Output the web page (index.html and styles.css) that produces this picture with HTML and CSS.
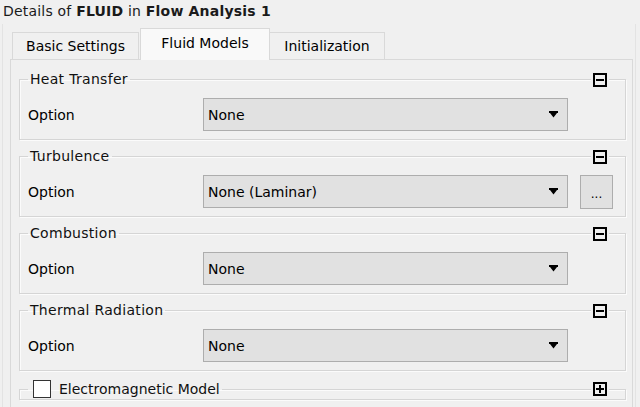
FILE: index.html
```html
<!DOCTYPE html>
<html>
<head>
<meta charset="utf-8">
<link rel="stylesheet" href="styles.css">
</head>
<body>
<div class="title">Details of <b>FLUID</b> in <b>Flow Analysis 1</b></div>
<div class="frame">
  <div class="tabs">
    <div class="tab">Basic Settings</div>
    <div class="tab active">Fluid Models</div>
    <div class="tab">Initialization</div>
  </div>
  <div class="panel">
    <fieldset class="group">
      <legend>Heat Transfer</legend>
      <span class="toggle minus"></span>
      <div class="row">
        <span class="label">Option</span>
        <div class="combo"><span>None</span><svg class="arrow" width="9" height="7" viewBox="0 0 9 7"><path d="M0 0H9V2H8L4.5 6.5L1 2H0Z" fill="#000"/></svg></div>
      </div>
    </fieldset>
    <fieldset class="group">
      <legend>Turbulence</legend>
      <span class="toggle minus"></span>
      <div class="row">
        <span class="label">Option</span>
        <div class="combo"><span>None (Laminar)</span><svg class="arrow" width="9" height="7" viewBox="0 0 9 7"><path d="M0 0H9V2H8L4.5 6.5L1 2H0Z" fill="#000"/></svg></div>
        <div class="more">...</div>
      </div>
    </fieldset>
    <fieldset class="group">
      <legend>Combustion</legend>
      <span class="toggle minus"></span>
      <div class="row">
        <span class="label">Option</span>
        <div class="combo"><span>None</span><svg class="arrow" width="9" height="7" viewBox="0 0 9 7"><path d="M0 0H9V2H8L4.5 6.5L1 2H0Z" fill="#000"/></svg></div>
      </div>
    </fieldset>
    <fieldset class="group">
      <legend>Thermal Radiation</legend>
      <span class="toggle minus"></span>
      <div class="row">
        <span class="label">Option</span>
        <div class="combo"><span>None</span><svg class="arrow" width="9" height="7" viewBox="0 0 9 7"><path d="M0 0H9V2H8L4.5 6.5L1 2H0Z" fill="#000"/></svg></div>
      </div>
    </fieldset>
    <fieldset class="group collapsed">
      <legend><span class="check"></span>Electromagnetic Model</legend>
      <span class="toggle plus"></span>
    </fieldset>
  </div>
</div>
</body>
</html>
```
FILE: styles.css
```css
html, body {
  margin: 0;
  padding: 0;
  background: #f0f0f0;
  height: 100%;
  overflow: hidden;
}
body {
  font-family: "DejaVu Sans", sans-serif;
  font-size: 14px;
  color: #000;
}
.title {
  height: 24px;
  line-height: 22px;
  padding-left: 3px;
  color: #1a1a1a;
  letter-spacing: 0.2px;
}
.title b {
  font-weight: bold;
}
.frame {
  margin-left: 2px;
  width: 634px;
  border-left: 1px solid #e3e3e3;
  border-right: 1px solid #e3e3e3;
  height: 400px;
  box-sizing: border-box;
  padding-top: 4px;
}
.tabs {
  display: flex;
  align-items: flex-end;
  height: 31px;
  margin-left: 9px;
  position: relative;
  z-index: 1;
}
.tab {
  height: 27px;
  box-sizing: border-box;
  border: 1px solid #d9d9d9;
  border-bottom: none;
  background: #f0f0f0;
  padding: 0 12px;
  display: flex;
  align-items: center;
  justify-content: center;
}
.tab:first-child { width: 127px; }
.tab:nth-child(3) { width: 116px; margin-left: -1px; }
.tab.active {
  width: 130px;
  height: 32px;
  margin-bottom: -1px;
  margin-left: 1px;
  background: #f9f9f9;
  padding-bottom: 4px;
}
.panel {
  margin-left: 7px;
  width: 623px;
  border: 1px solid #d9d9d9;
  border-bottom: none;
  box-sizing: border-box;
  height: 360px;
  padding: 11px 6px 0 8px;
  display: flex;
  flex-direction: column;
  gap: 8px;
}
.group {
  position: relative;
  margin: 0;
  padding: 11px 8px 8px 8px;
  border: 1px solid #d5d5d5;
  box-shadow: inset 1px 1px 0 #fbfbfb, 1px 1px 0 #fbfbfb;
  min-width: 0;
}
.group legend {
  padding: 0 2px;
  line-height: 16px;
  color: #111;
  display: flex;
  align-items: center;
  letter-spacing: 0.3px;
}
.group.collapsed {
  padding: 0 8px;
}
.group.collapsed legend {
  line-height: 20px;
  padding-left: 5px;
  letter-spacing: 0;
}
.check {
  width: 18px;
  height: 18px;
  box-sizing: border-box;
  border: 1px solid #333;
  background: #fff;
  margin-right: 8px;
}
.toggle {
  position: absolute;
  right: 18px;
  top: -14px;
  width: 14px;
  height: 14px;
  box-sizing: border-box;
  border: 2px solid #000;
  background: #f0f0f0;
  outline: 2px solid #f0f0f0;
}
.toggle::before {
  content: "";
  position: absolute;
  left: 1px;
  right: 1px;
  top: 4px;
  height: 2px;
  background: #000;
}
.toggle.plus::after {
  content: "";
  position: absolute;
  top: 1px;
  bottom: 1px;
  left: 4px;
  width: 2px;
  background: #000;
}
.group.collapsed .toggle {
  top: -17px;
}
.row {
  display: flex;
  align-items: center;
  height: 33px;
}
.label {
  width: 175px;
  flex: none;
}
.combo {
  width: 365px;
  height: 33px;
  box-sizing: border-box;
  border: 1px solid #adadad;
  background: #e1e1e1;
  display: flex;
  align-items: center;
  justify-content: space-between;
  padding: 0 9px 0 4px;
}
.arrow {
  display: block;
}
.more {
  margin-left: 12px;
  width: 33px;
  height: 34px;
  box-sizing: border-box;
  border: 1px solid #adadad;
  background: #e1e1e1;
  display: flex;
  align-items: center;
  justify-content: center;
  font-size: 12px;
  padding-top: 4px;
  align-self: flex-start;
}
```
